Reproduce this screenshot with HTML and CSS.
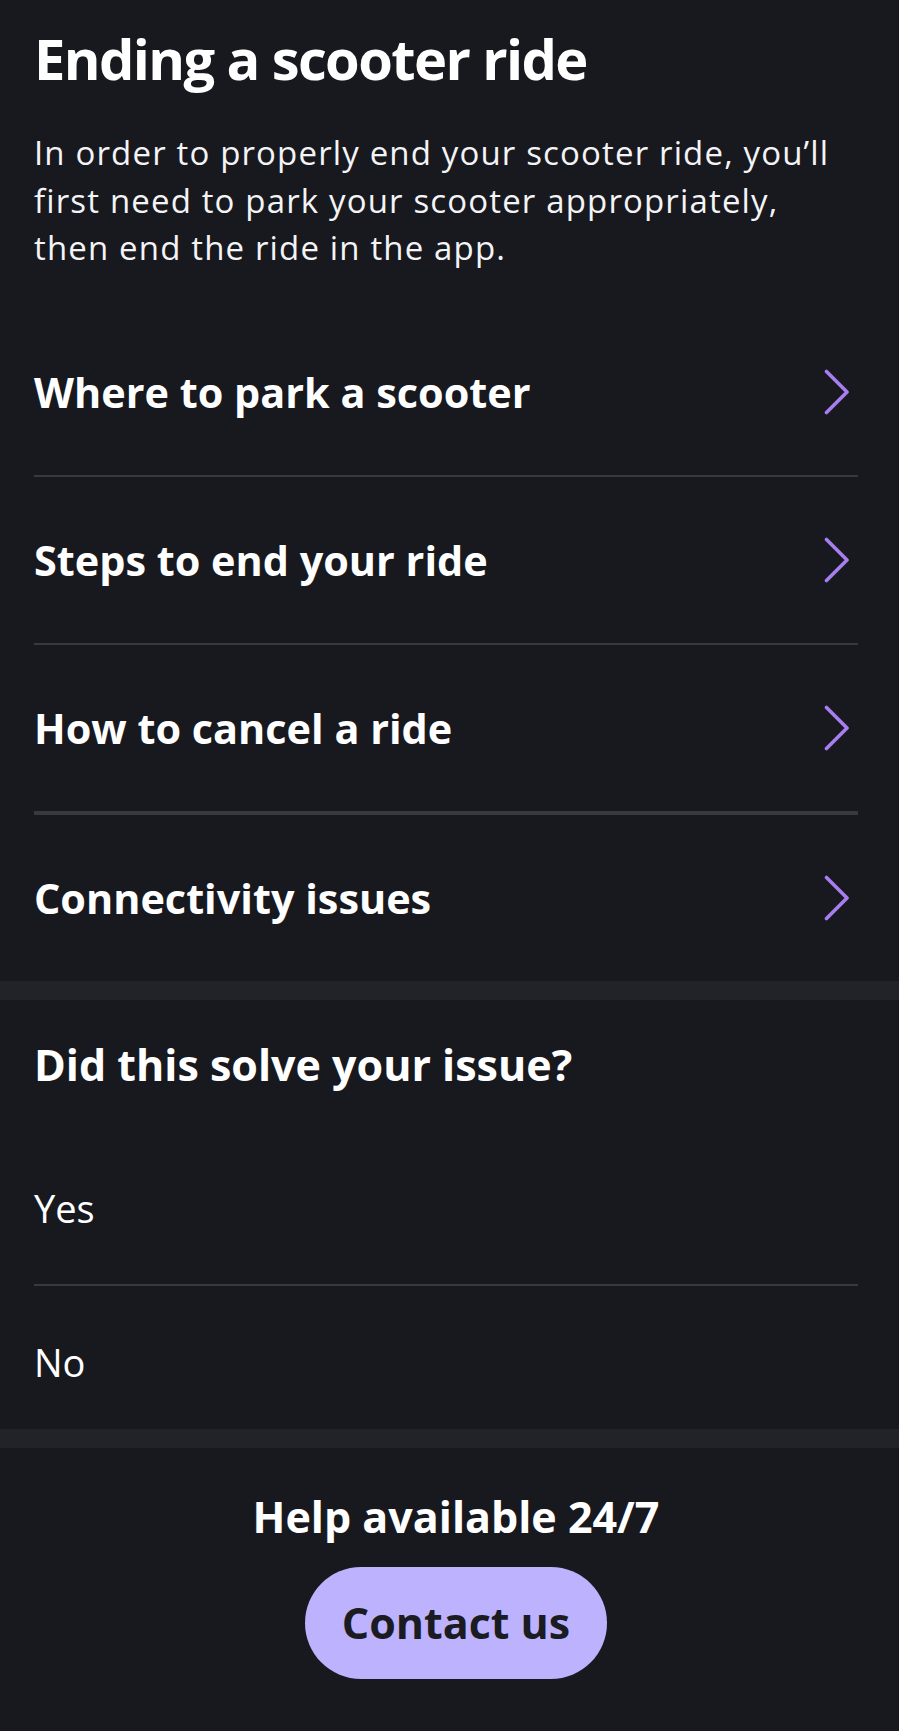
FILE: index.html
```html
<!DOCTYPE html>
<html lang="en">
<head>
<meta charset="utf-8">
<title>Ending a scooter ride</title>
<link rel="stylesheet" href="styles.css">
</head>
<body>
<main class="page">
  <section class="intro">
    <h1 class="title">Ending a scooter ride</h1>
    <p class="lead">In order to properly end your scooter ride, you’ll first need to park your scooter appropriately, then end the ride in the app.</p>
    <ul class="links">
      <li class="link-row"><span class="link-text">Where to park a scooter</span><svg class="chev" width="26" height="46" viewBox="0 0 26 46"><path d="M2.5 2.5 L23 23 L2.5 43.5" /></svg></li>
      <li class="link-row"><span class="link-text">Steps to end your ride</span><svg class="chev" width="26" height="46" viewBox="0 0 26 46"><path d="M2.5 2.5 L23 23 L2.5 43.5" /></svg></li>
      <li class="link-row link-row--thick"><span class="link-text">How to cancel a ride</span><svg class="chev" width="26" height="46" viewBox="0 0 26 46"><path d="M2.5 2.5 L23 23 L2.5 43.5" /></svg></li>
      <li class="link-row"><span class="link-text">Connectivity issues</span><svg class="chev" width="26" height="46" viewBox="0 0 26 46"><path d="M2.5 2.5 L23 23 L2.5 43.5" /></svg></li>
    </ul>
  </section>
  <section class="feedback">
    <h2 class="question">Did this solve your issue?</h2>
    <ul class="options">
      <li class="option">Yes</li>
      <li class="option">No</li>
    </ul>
  </section>
  <footer class="help">
    <h2 class="help-title">Help available 24/7</h2>
    <a class="contact" href="#">Contact us</a>
  </footer>
</main>
</body>
</html>
```
FILE: styles.css
```css
html, body {
  margin: 0;
  padding: 0;
  background: #18191f;
}

body {
  color: #ffffff;
  font-family: "Open Sans", "Liberation Sans", sans-serif;
}

.page {
  min-height: 1731px;
}

.intro {
  padding: 25px 41px 0 34px;
}

.title {
  margin: 0;
  font-size: 56px;
  line-height: 67px;
  font-weight: 700;
  letter-spacing: -1.6px;
}

.lead {
  margin: 37px 20px 0 0;
  font-size: 33px;
  line-height: 47.7px;
  font-weight: 400;
  letter-spacing: 1.15px;
  color: #f4f4f6;
}

.links {
  list-style: none;
  margin: 37px 0 0;
  padding: 0;
}

.link-row {
  display: flex;
  align-items: center;
  justify-content: space-between;
  padding: 58px 8px 58px 0;
  border-bottom: 2px solid #38393e;
  font-size: 41.4px;
  line-height: 50px;
  font-weight: 700;
}

.link-row--thick {
  border-bottom-width: 4px;
}

.link-row:last-child {
  border-bottom: 0;
}

.chev {
  flex: none;
  display: block;
}

.chev path {
  fill: none;
  stroke: #a77ef0;
  stroke-width: 3.6;
  stroke-linecap: round;
  stroke-linejoin: round;
}

.feedback {
  border-top: 19px solid #222328;
  padding: 40px 41px 0 34px;
}

.question {
  margin: 0 0 42px;
  font-size: 43px;
  line-height: 50px;
  font-weight: 700;
}

.options {
  list-style: none;
  margin: 0;
  padding: 0;
}

.option {
  padding: 54px 0 45px;
  font-size: 38px;
  line-height: 44px;
  font-weight: 400;
}

.option:first-child {
  padding-bottom: 54px;
  border-bottom: 2px solid #38393e;
}

.help {
  border-top: 19px solid #222328;
  padding: 44px 0 0 13px;
  display: flex;
  flex-direction: column;
  align-items: center;
}

.help-title {
  margin: 0;
  font-size: 43px;
  line-height: 50px;
  font-weight: 700;
}

.contact {
  margin-top: 25px;
  padding: 31px 37px;
  border-radius: 57px;
  background: #bcb2fe;
  color: #1b1b22;
  font-size: 43px;
  line-height: 50px;
  font-weight: 700;
  text-decoration: none;
}
```
